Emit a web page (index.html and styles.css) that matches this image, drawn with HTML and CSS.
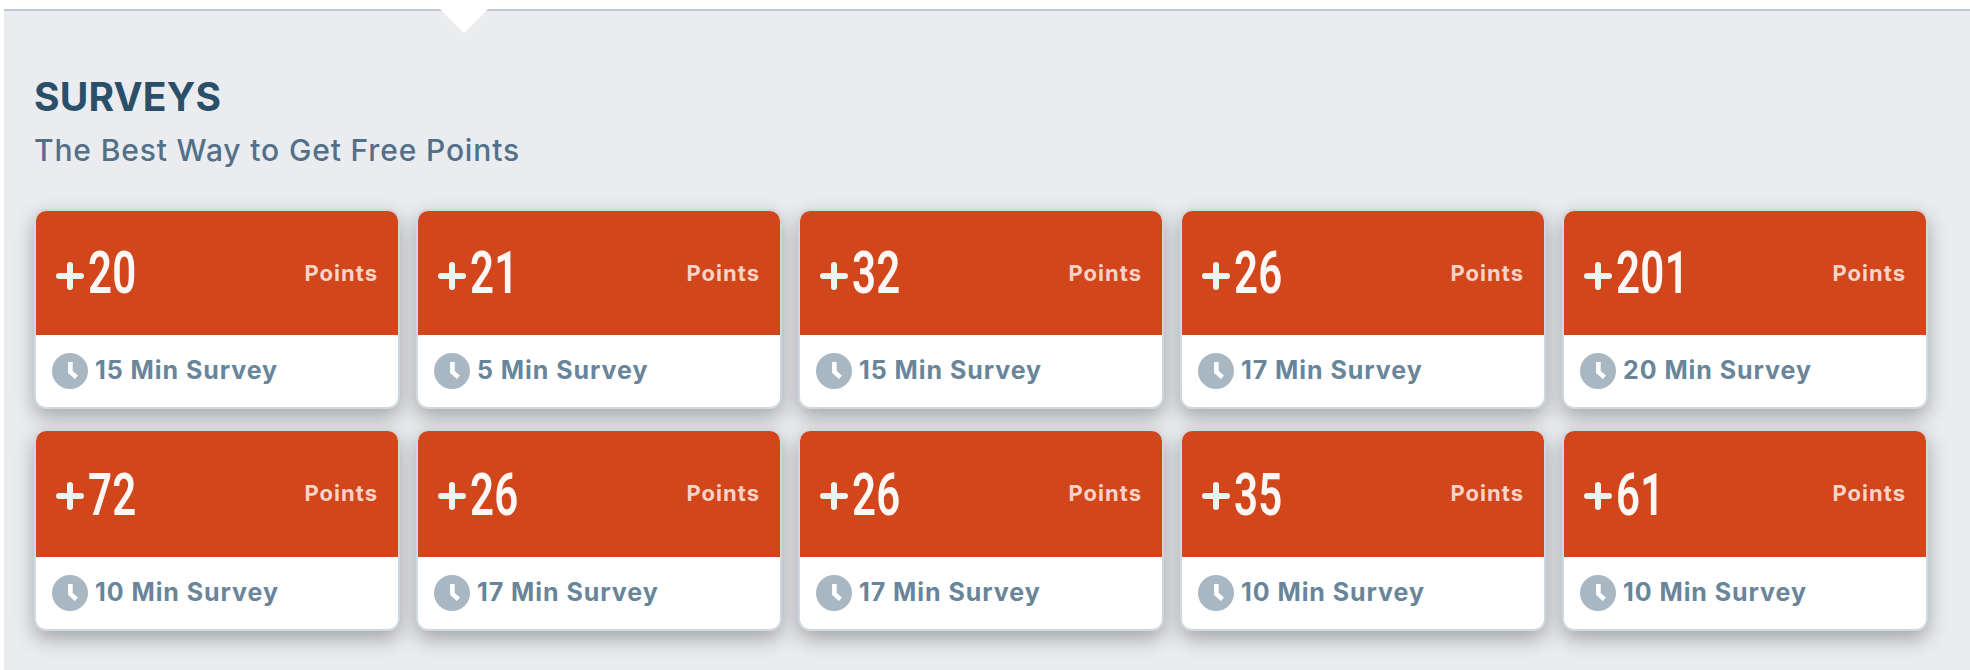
FILE: index.html
```
<!DOCTYPE html>
<html lang="en">
<head>
	<meta charset="UTF-8">
	<title>Surveys</title>
	<link rel="stylesheet" href="styles.css">
</head>
<body>
<svg class="sprite" width="0" height="0">
	<symbol id="plus" viewBox="0 0 28 28">
		<path d="M14 3v22M3 14h22" fill="none" stroke="#ebf5f0" stroke-width="6" stroke-linecap="round"/>
	</symbol>
	<symbol id="clock" viewBox="0 0 36 36">
		<circle cx="18" cy="18" r="18" fill="#a9b7c3"/>
		<path d="M18.4 9v10l6 5.2" fill="none" stroke="#fff" stroke-width="4.6"/>
	</symbol>
</svg>

<div class="surveys">
	<span class="arrow"></span>
	<h1 class="title">SURVEYS</h1>
	<p class="subtitle">The Best Way to Get Free Points</p>
	<div class="list" id="list"></div>
</div>

<script src="surveys.js"></script>
</body>
</html>
```

FILE: styles.css
```
body,html{
    padding: 0;
    margin: 0;
    background: #ffffff;
    font-family: Inter, "Open Sans", sans-serif;
}
.sprite{
    display: block;
}
.surveys{
    position: relative;
    box-sizing: border-box;
    height: 661px;
    margin: 9px 0 0 4px;
    padding: 62px 42px 0 30px;
    border-top: 2px solid #bdc8d1;
    background: #ebecf0;
}
/* white notch over the top border */
.arrow{
    position: absolute;
    top: -2px;
    left: 436px;
    border: 24px solid transparent;
    border-top-color: #ffffff;
    border-bottom: 0;
}
.title{
    margin: 0;
    font-size: 39px;
    font-weight: 700;
    line-height: 48px;
    letter-spacing: 0.2px;
    color: #2a4f69;
}
.subtitle{
    margin: 9px 0 0;
    font-size: 30px;
    font-weight: 500;
    line-height: 40px;
    letter-spacing: 0.85px;
    color: #527189;
}
.list{
    display: grid;
    grid-template-columns: repeat(5, 366px);
    gap: 20px 16px;
    margin-top: 39px;
}
.card{
    border: 2px solid #d0d9df;
    border-radius: 12px;
    background: #ffffff;
    box-shadow: 0 8px 20px rgba(0, 0, 0, 0.3);
    overflow: hidden;
}
.reward{
    display: flex;
    align-items: center;
    height: 124px;
    padding: 0 20px;
    background: #d1461a;
}
.card:nth-child(n+6) .reward{
    padding-bottom: 2px;
}
.plus{
    width: 28px;
    height: 28px;
    margin: 5px 4px 0 0;
}
.amount{
    font-family: Roboto, sans-serif;
    font-size: 60px;
    font-weight: 600;
    line-height: 124px;
    letter-spacing: 0.5px;
    color: #fff7f5;
    transform: scaleX(0.7);
    transform-origin: left;
}
.card:nth-child(n+6) .amount{
    margin-top: 3px;
}
.unit{
    margin-left: auto;
    font-size: 22px;
    font-weight: 700;
    letter-spacing: 1px;
    color: #f9d3c9;
}
.length{
    display: flex;
    align-items: center;
    height: 72px;
    padding-left: 16px;
    font-size: 25px;
    font-weight: 700;
    letter-spacing: 0.95px;
    color: #698599;
}
.length span{
    margin-bottom: 2px;
}
.clock{
    width: 36px;
    height: 36px;
    margin-right: 7px;
}
```

FILE: surveys.js
```
var surveys = [
    {points: 20, minutes: 15},
    {points: 21, minutes: 5},
    {points: 32, minutes: 15},
    {points: 26, minutes: 17},
    {points: 201, minutes: 20},
    {points: 72, minutes: 10},
    {points: 26, minutes: 17},
    {points: 26, minutes: 17},
    {points: 35, minutes: 10},
    {points: 61, minutes: 10}
];
var list = document.getElementById('list');

for (var i = 0; i < surveys.length; i++) {
    var card = document.createElement('div');
    card.className = 'card';
    card.innerHTML =
        '<div class="reward"><svg class="plus"><use href="#plus"/></svg>' +
        '<span class="amount">' + surveys[i].points + '</span>' +
        '<span class="unit">Points</span></div>' +
        '<div class="length"><svg class="clock"><use href="#clock"/></svg>' +
        '<span>' + surveys[i].minutes + ' Min Survey</span></div>';
    list.appendChild(card);
}
```
